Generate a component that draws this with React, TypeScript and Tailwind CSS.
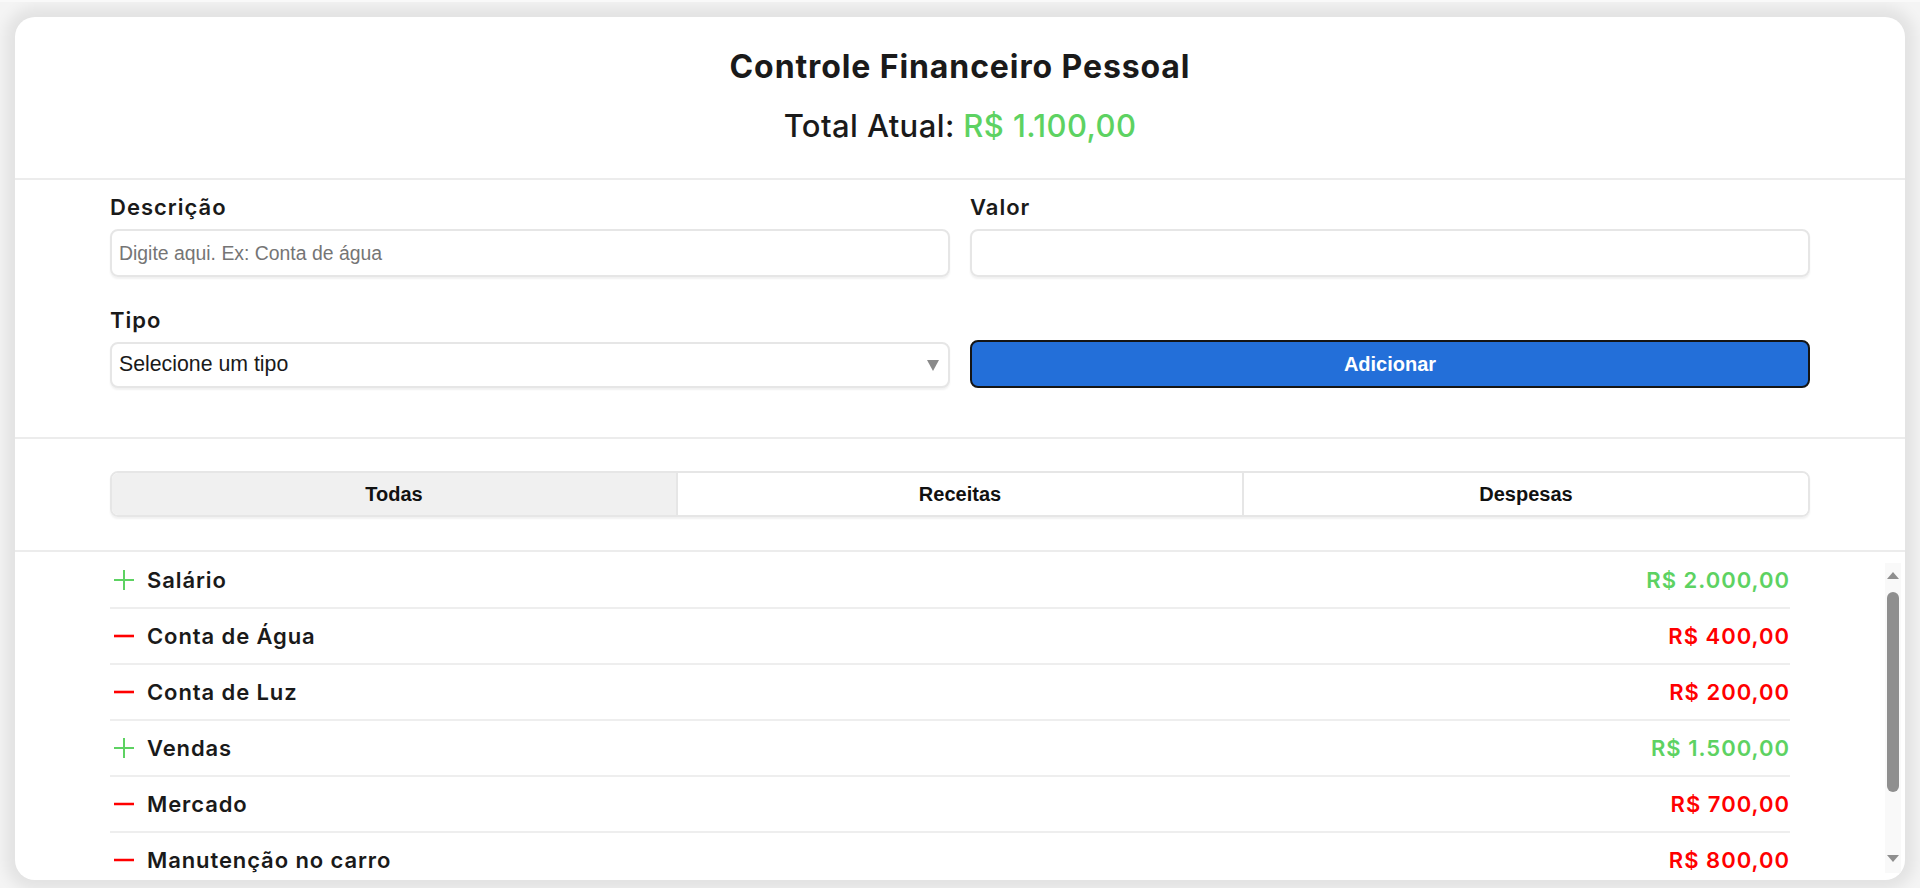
import { useEffect, useRef } from "react";

type Transacao = {
  id: number;
  descricao: string;
  valor: number;
  tipo: "receita" | "despesa";
};

const transacoes: Transacao[] = [
  { id: 1, descricao: "Salário", valor: 2000, tipo: "receita" },
  { id: 2, descricao: "Conta de Água", valor: 400, tipo: "despesa" },
  { id: 3, descricao: "Conta de Luz", valor: 200, tipo: "despesa" },
  { id: 4, descricao: "Vendas", valor: 1500, tipo: "receita" },
  { id: 5, descricao: "Mercado", valor: 700, tipo: "despesa" },
  { id: 6, descricao: "Manutenção no carro", valor: 800, tipo: "despesa" },
  { id: 7, descricao: "Internet", valor: 300, tipo: "despesa" },
];

const formatar = (valor: number) => {
  const [inteiro, centavos] = valor.toFixed(2).split(".");
  const milhar = inteiro.replace(/\B(?=(\d{3})+(?!\d))/g, ".");
  return `R$ ${milhar},${centavos}`;
};

const total = transacoes.reduce(
  (acc, t) => (t.tipo === "receita" ? acc + t.valor : acc - t.valor),
  0
);

const Icone = ({ tipo }: { tipo: Transacao["tipo"] }) =>
  tipo === "receita" ? (
    <svg width="22" height="22" viewBox="0 0 22 22" className="shrink-0 text-[#5dd262]">
      <path d="M11 1v20M1 11h20" stroke="currentColor" strokeWidth="2" />
    </svg>
  ) : (
    <svg width="22" height="22" viewBox="0 0 22 22" className="shrink-0 text-[#ff0000]">
      <path d="M1 11h20" stroke="currentColor" strokeWidth="2.6" />
    </svg>
  );

const abas = ["Todas", "Receitas", "Despesas"];

export default function App() {
  const listaRef = useRef<HTMLDivElement>(null);

  useEffect(() => {
    if (listaRef.current) listaRef.current.scrollTop = 10;
  }, []);

  return (
    <div className="h-[888px] overflow-hidden border-t-2 border-[#f9f9f9] bg-[#f4f4f4] px-[15px] pt-[15px] font-['Inter',sans-serif] text-[#1a1a1a]">
      <div className="flex h-[863px] flex-col overflow-hidden rounded-[20px] bg-white shadow-[0_0_14px_10px_rgba(0,0,0,0.07)]">
        {/* Cabeçalho */}
        <header className="border-b-2 border-[#ececec] pb-[33px] pt-[30px] text-center">
          <h1 className="text-[32px] font-bold leading-[39px] tracking-[0.9px]">Controle Financeiro Pessoal</h1>
          <p className="mt-[20px] text-[31px] font-medium leading-[39px] tracking-[0.4px]">
            Total Atual: <span className="text-[#5dd262]">{formatar(total)}</span>
          </p>
        </header>

        {/* Formulário */}
        <form className="border-b-2 border-[#ececec] pb-[49px] pt-[14px]">
          <div className="mx-auto grid w-[1700px] grid-cols-2 items-end gap-x-[20px] gap-y-[30px]">
            <label className="flex flex-col gap-[9px]">
              <span className="text-[22px] font-semibold leading-[26px] tracking-[1px]">Descrição</span>
              <input
                type="text"
                placeholder="Digite aqui. Ex: Conta de água"
                className="h-[48px] rounded-lg border-2 border-[#e6e6e6] px-[7px] font-['Liberation_Sans',Arial,sans-serif] text-[19.4px] shadow-[0_2px_2px_rgba(0,0,0,0.06)] outline-none placeholder:text-[#757575]"
              />
            </label>
            <label className="flex flex-col gap-[9px]">
              <span className="text-[22px] font-semibold leading-[26px] tracking-[1px]">Valor</span>
              <input
                type="text"
                className="h-[48px] rounded-lg border-2 border-[#e6e6e6] px-[7px] font-['Liberation_Sans',Arial,sans-serif] text-[19.4px] shadow-[0_2px_2px_rgba(0,0,0,0.06)] outline-none"
              />
            </label>
            <label className="flex flex-col gap-[9px]">
              <span className="text-[22px] font-semibold leading-[26px] tracking-[1px]">Tipo</span>
              <div className="relative">
                <select
                  defaultValue=""
                  className="h-[46px] w-full appearance-none rounded-lg border-2 border-[#e6e6e6] bg-white px-[7px] font-['Liberation_Sans',Arial,sans-serif] text-[21.3px] text-[#1a1a1a] shadow-[0_2px_2px_rgba(0,0,0,0.06)] outline-none"
                >
                  <option value="">Selecione um tipo</option>
                  <option value="receita">Receita</option>
                  <option value="despesa">Despesa</option>
                </select>
                <span className="pointer-events-none absolute right-[11px] top-[18px] h-0 w-0 border-x-[6px] border-t-[11px] border-x-transparent border-t-[#8a8a8a]" />
              </div>
            </label>
            <button
              type="button"
              className="h-[48px] rounded-lg border-2 border-[#151515] bg-[#236fd9] font-['Liberation_Sans',Arial,sans-serif] text-[20px] font-bold text-white"
            >
              Adicionar
            </button>
          </div>
        </form>

        {/* Filtros */}
        <div className="border-b-2 border-[#ececec] pb-[33px] pt-[32px]">
          <div className="mx-auto flex h-[46px] w-[1700px] overflow-hidden rounded-lg border-2 border-[#e6e6e6] shadow-[0_2px_2px_rgba(0,0,0,0.06)]">
            {abas.map((aba, i) => (
              <button
                key={aba}
                type="button"
                className={`flex-1 font-['Liberation_Sans',Arial,sans-serif] text-[20px] font-bold text-[#111] ${
                  i === 0 ? "bg-[#f0f0f0]" : "border-l-2 border-[#e6e6e6] bg-white"
                }`}
              >
                {aba}
              </button>
            ))}
          </div>
        </div>

        {/* Lista */}
        <div className="mr-[4px] mt-[11px] flex h-[310px]">
          <div
            ref={listaRef}
            className="flex-1 overflow-y-auto px-[95px] [scrollbar-width:none]"
          >
            <ul className="pb-[42px]">
              {transacoes.map((t) => (
                <li
                  key={t.id}
                  className="flex h-[56px] items-center justify-between border-b-2 border-[#eeeeee]"
                >
                  <div className="flex items-center gap-[12px] pl-[3px]">
                    <Icone tipo={t.tipo} />
                    <span className="text-[22px] font-semibold tracking-[0.9px]">{t.descricao}</span>
                  </div>
                  <span
                    className={`text-[22px] font-semibold tracking-[1px] ${
                      t.tipo === "receita" ? "text-[#5dd262]" : "text-[#ff0000]"
                    }`}
                  >
                    {formatar(t.valor)}
                  </span>
                </li>
              ))}
            </ul>
          </div>
          {/* barra de rolagem */}
          <div className="flex w-[16px] flex-col items-center bg-[#f9f9f9] pt-[9px]">
            <span className="h-0 w-0 border-x-[6px] border-b-[7px] border-x-transparent border-b-[#8f8f8f]" />
            <span className="mt-[13px] h-[200px] w-[12px] rounded-full bg-[#8f8f8f]" />
            <span className="mt-[63px] h-0 w-0 border-x-[6px] border-t-[7px] border-x-transparent border-t-[#8f8f8f]" />
          </div>
        </div>
      </div>
    </div>
  );
}
